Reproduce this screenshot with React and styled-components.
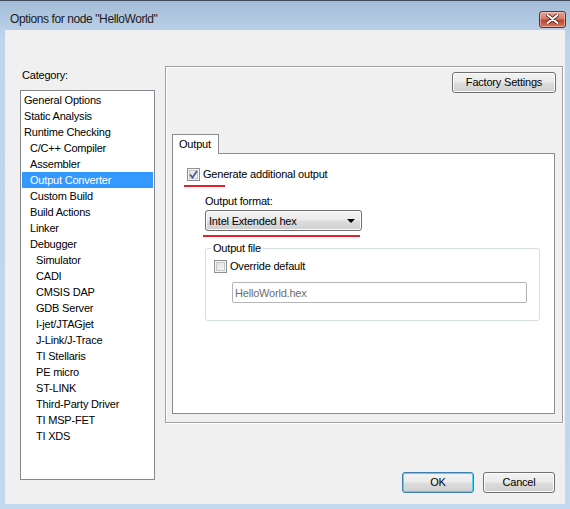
import React from 'react';
import styled, { createGlobalStyle, css } from 'styled-components';

const GlobalStyle = createGlobalStyle`
  html, body {
    margin: 0;
    padding: 0;
    background: #c3d8ee;
  }
  body {
    font-family: "Liberation Sans", Arial, sans-serif;
    font-size: 11px;
    color: #000;
  }
`;

const categories = [
  ['General Options', 0],
  ['Static Analysis', 0],
  ['Runtime Checking', 0],
  ['C/C++ Compiler', 1],
  ['Assembler', 1],
  ['Output Converter', 1, true],
  ['Custom Build', 1],
  ['Build Actions', 1],
  ['Linker', 1],
  ['Debugger', 1],
  ['Simulator', 2],
  ['CADI', 2],
  ['CMSIS DAP', 2],
  ['GDB Server', 2],
  ['I-jet/JTAGjet', 2],
  ['J-Link/J-Trace', 2],
  ['TI Stellaris', 2],
  ['PE micro', 2],
  ['ST-LINK', 2],
  ['Third-Party Driver', 2],
  ['TI MSP-FET', 2],
  ['TI XDS', 2],
];

const Window = styled.div`
  width: 570px;
  height: 509px;
  box-sizing: border-box;
  display: flex;
  flex-direction: column;
  border-top: 1px solid #3d4a59;
  background: linear-gradient(#a3bcd7 0px, #b4cbe4 22px, #bfd5ec 40px, #c3d8ee 100%);
  letter-spacing: -0.2px;
`;

const TitleBar = styled.div`
  height: 29px;
  box-sizing: border-box;
  display: flex;
  align-items: center;
  padding: 7px 4px 0 10px;
`;

const TitleText = styled.div`
  flex: 1;
  font-size: 12px;
  letter-spacing: -0.4px;
  color: #1b1b1b;
`;

const CloseButton = styled.div`
  width: 27px;
  height: 17px;
  box-sizing: border-box;
  border: 1px solid #6b2c2c;
  border-radius: 3px;
  background: linear-gradient(#e8a696 0%, #d37a65 45%, #c1452d 55%, #d2785f 100%);
  box-shadow: inset 0 0 0 1px rgba(255, 220, 210, 0.5);
  display: flex;
  align-items: center;
  justify-content: center;
`;

const Client = styled.div`
  flex: 1;
  margin: 0 5px 5px 5px;
  background: #f0f0f0;
  display: grid;
  grid-template-columns: 135px 398px;
  grid-template-rows: 357px auto;
  column-gap: 10px;
  padding: 36px 0 0 15px;
  align-content: start;
`;

const LeftColumn = styled.div`
  grid-row: 1 / 3;
  padding-top: 3px;
  display: flex;
  flex-direction: column;
`;

const FieldLabel = styled.div`
  line-height: 13px;
  margin-left: ${(p) => p.$indent || 0}px;
  margin-top: ${(p) => p.$top || 0}px;
  margin-bottom: ${(p) => p.$gap || 0}px;
`;

const ListBox = styled.div`
  height: 390px;
  box-sizing: border-box;
  border: 1px solid #828790;
  background: #fff;
  padding-top: 1px;
`;

const ListItem = styled.div`
  height: 16px;
  line-height: 16px;
  margin: 0 1px;
  padding-left: ${(p) => 2 + p.$level * 6}px;
  white-space: nowrap;
  ${(p) =>
    p.$selected &&
    css`
      background: #3399ff;
      color: #fff;
    `}
`;

const Panel = styled.div`
  box-sizing: border-box;
  border: 1px solid #a0a0a0;
  box-shadow: 1px 1px 0 #fff, inset 1px 1px 0 #fff;
  padding: 5px 6px 0 6px;
  display: flex;
  flex-direction: column;
`;

const PanelTop = styled.div`
  display: flex;
  justify-content: flex-end;
  margin-bottom: 41px;
`;

const WinButton = styled.div`
  width: ${(p) => p.$width}px;
  height: 21px;
  box-sizing: border-box;
  border: 1px solid ${(p) => (p.$primary ? '#3c7fb1' : '#707070')};
  border-radius: 3px;
  background: linear-gradient(#f2f2f2 0%, #ebebeb 48%, #dddddd 52%, #cfcfcf 100%);
  box-shadow: inset 0 0 0 1px ${(p) => (p.$primary ? '#48d7fb' : '#fcfcfc')};
  display: flex;
  align-items: center;
  justify-content: center;
  line-height: 13px;
`;

const Tabs = styled.div`
  display: flex;
  flex-direction: column;
  width: 383px;
`;

const TabStrip = styled.div`
  display: flex;
  height: 19px;
`;

const Tab = styled.div`
  width: 47px;
  box-sizing: border-box;
  height: 20px;
  border: 1px solid #898c95;
  border-bottom: none;
  background: #fff;
  padding: 3px 0 0 6px;
  line-height: 13px;
  position: relative;
  z-index: 1;
`;

const TabPage = styled.div`
  height: 261px;
  box-sizing: border-box;
  border: 1px solid #898c95;
  background: #fff;
  padding: 14px 0 0 14px;
  display: flex;
  flex-direction: column;
`;

const CheckRow = styled.div`
  display: flex;
  align-items: center;
  height: 13px;
  margin-left: ${(p) => p.$indent || 0}px;
  margin-top: ${(p) => p.$top || 0}px;
`;

const CheckBox = styled.div`
  width: 13px;
  height: 13px;
  box-sizing: border-box;
  border: 1px solid #8e8f8f;
  background: linear-gradient(135deg, #dcdcdc, #fbfbfb);
  box-shadow: inset 0 0 0 1px #f4f4f4, inset 0 0 0 2px #c9c9c9;
  margin-right: 3px;
  display: flex;
  align-items: center;
  justify-content: center;
`;

const CheckLabel = styled.span`
  line-height: 13px;
`;

const Annotation = styled.div`
  height: 2px;
  width: ${(p) => p.$width}px;
  background: #e3222b;
  margin-left: ${(p) => p.$left}px;
  margin-top: ${(p) => p.$top}px;
`;

const Indented = styled.div`
  margin-left: 18px;
  display: flex;
  flex-direction: column;
`;

const Combo = styled.div`
  width: 157px;
  height: 21px;
  box-sizing: border-box;
  border: 1px solid #707070;
  border-radius: 3px;
  background: linear-gradient(#f2f2f2 0%, #ebebeb 48%, #dddddd 52%, #cfcfcf 100%);
  box-shadow: inset 0 0 0 1px #fcfcfc;
  display: flex;
  align-items: center;
  padding: 0 6px 0 3px;
`;

const ComboText = styled.span`
  flex: 1;
`;

const Arrow = styled.div`
  width: 0;
  height: 0;
  border-left: 4px solid transparent;
  border-right: 4px solid transparent;
  border-top: 4px solid #000;
`;

const Group = styled.fieldset`
  margin: 5px 0 0 0;
  width: 335px;
  height: 79px;
  box-sizing: border-box;
  border: 1px solid #d5dfe5;
  border-radius: 3px;
  padding: 0 0 0 5px;
  min-width: 0;
`;

const Legend = styled.legend`
  padding: 0 2px;
  line-height: 13px;
`;

const TextInput = styled.div`
  width: 295px;
  height: 21px;
  box-sizing: border-box;
  margin: 9px 0 0 21px;
  border: 1px solid #b5b5b5;
  border-radius: 2px;
  background: #fff;
  color: #6d6d6d;
  padding-left: 2px;
  display: flex;
  align-items: center;
`;

const Footer = styled.div`
  grid-column: 2;
  display: flex;
  justify-content: flex-end;
  gap: 9px;
  padding: 49px 8px 0 0;
`;

const CheckMark = () => (
  <svg width="9" height="9" viewBox="0 0 9 9">
    <path d="M1 4.5 L3.5 7.5 L8 1" fill="none" stroke="#4a5f92" strokeWidth="1.8" />
  </svg>
);

const CloseGlyph = () => (
  <svg width="13" height="10" viewBox="0 0 13 10">
    <path
      d="M1.5 1 L11.5 9 M11.5 1 L1.5 9"
      stroke="#5a2020"
      strokeWidth="3.6"
      strokeLinecap="round"
    />
    <path
      d="M1.5 1 L11.5 9 M11.5 1 L1.5 9"
      stroke="#fff"
      strokeWidth="2"
      strokeLinecap="round"
    />
  </svg>
);

const App = () => (
  <>
    <GlobalStyle />
    <Window>
      <TitleBar>
        <TitleText>Options for node "HelloWorld"</TitleText>
        <CloseButton>
          <CloseGlyph />
        </CloseButton>
      </TitleBar>
      <Client>
        <LeftColumn>
          <FieldLabel $indent={2} $gap={8}>
            Category:
          </FieldLabel>
          <ListBox>
            {categories.map(([name, level, selected]) => (
              <ListItem key={name} $level={level} $selected={selected}>
                {name}
              </ListItem>
            ))}
          </ListBox>
        </LeftColumn>
        <Panel>
          <PanelTop>
            <WinButton $width={104}>Factory Settings</WinButton>
          </PanelTop>
          <Tabs>
            <TabStrip>
              <Tab>Output</Tab>
            </TabStrip>
            <TabPage>
              <CheckRow>
                <CheckBox>
                  <CheckMark />
                </CheckBox>
                <CheckLabel>Generate additional output</CheckLabel>
              </CheckRow>
              <Annotation $width={41} $left={-3} $top={4} />
              <Indented>
                <FieldLabel $top={8} $gap={2}>
                  Output format:
                </FieldLabel>
                <Combo>
                  <ComboText>Intel Extended hex</ComboText>
                  <Arrow />
                </Combo>
                <Annotation $width={157} $left={-2} $top={4} />
                <Group>
                  <Legend>Output file</Legend>
                  <CheckRow $indent={3} $top={5}>
                    <CheckBox />
                    <CheckLabel>Override default</CheckLabel>
                  </CheckRow>
                  <TextInput>HelloWorld.hex</TextInput>
                </Group>
              </Indented>
            </TabPage>
          </Tabs>
        </Panel>
        <Footer>
          <WinButton $width={72} $primary>
            OK
          </WinButton>
          <WinButton $width={72}>Cancel</WinButton>
        </Footer>
      </Client>
    </Window>
  </>
);

export default App;
